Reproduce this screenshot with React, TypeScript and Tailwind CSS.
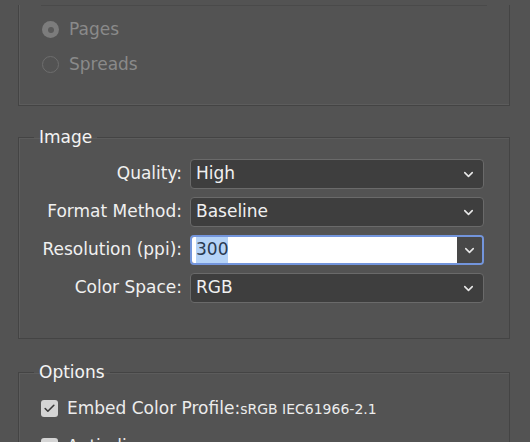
import { ChevronDown, Check } from 'lucide-react';

const font = { fontFamily: '"DejaVu Sans", "Liberation Sans", sans-serif' };

function Select({ value }: { value: string }) {
  return (
    <div className="flex h-[30px] flex-1 items-center justify-between rounded-[4px] border border-[#6a6a6a] bg-[#3e3e3e] pl-[5px] pr-[7px] text-[17px] text-[#f0f0f0]">
      <span>{value}</span>
      <ChevronDown className="h-[15px] w-[15px] text-[#e8e8e8]" strokeWidth={2.5} />
    </div>
  );
}

function Row({ label, children }: { label: string; children: React.ReactNode }) {
  return (
    <div className="flex items-center gap-[8px]">
      <div className="w-[155px] text-right text-[17px] text-[#f0f0f0]">{label}</div>
      {children}
    </div>
  );
}

export default function App() {
  return (
    <div className="h-[442px] w-[530px] overflow-hidden bg-[#535353] pl-[18px] pr-[20px]" style={font}>
      {/* Pages / Spreads */}
      <div className="-mt-[2px] h-[101px] border-x border-b border-[#444] shadow-[inset_1px_-1px_0_#5c5c5c]">
        <div className="mx-[22px] mt-[7px] h-px bg-[#4a4a4a]" />
        <div className="flex flex-col gap-[9px] pl-[23px] pt-[11px] text-[17px] text-[#8a8a8a]">
          <label className="flex items-center gap-[10px]">
            <span className="flex h-[17px] w-[17px] items-center justify-center rounded-full bg-[#7c7c7c]">
              <span className="h-[6px] w-[6px] rounded-full bg-[#5a5a5a]" />
            </span>
            Pages
          </label>
          <label className="flex items-center gap-[10px]">
            <span className="h-[17px] w-[17px] rounded-full border border-[#6e6e6e]" />
            Spreads
          </label>
        </div>
      </div>

      {/* Image */}
      <fieldset className="mt-[21px] h-[212px] border border-[#444] pb-[10px] shadow-[inset_1px_1px_0_#5c5c5c]">
        <legend className="ml-[15px] px-[5px] text-[17px] font-medium leading-[20px] text-[#f4f4f4]">Image</legend>
        <div className="mr-[25px] mt-[12px] flex flex-col gap-[8px] pl-[8px]">
          <Row label="Quality:">
            <Select value="High" />
          </Row>
          <Row label="Format Method:">
            <Select value="Baseline" />
          </Row>
          <Row label="Resolution (ppi):">
            <div className="flex h-[30px] flex-1 overflow-hidden rounded-[4px] border-2 border-[#7395dc] text-[17px]">
              <div className="flex flex-1 items-center bg-white pl-[4px]">
                <span className="bg-[#b5d3f7] text-[#2a3a50]">300</span>
              </div>
              <div className="flex w-[25px] items-center justify-center bg-[#484848]">
                <ChevronDown className="h-[15px] w-[15px] text-[#e8e8e8]" strokeWidth={2.5} />
              </div>
            </div>
          </Row>
          <Row label="Color Space:">
            <Select value="RGB" />
          </Row>
        </div>
      </fieldset>

      {/* Options */}
      <fieldset className="mt-[23px] h-[120px] border border-[#444] shadow-[inset_1px_1px_0_#5c5c5c]">
        <legend className="ml-[15px] px-[5px] text-[17px] font-medium leading-[20px] text-[#f4f4f4]">Options</legend>
        <div className="flex flex-col gap-[12px] pl-[22px] pt-[14px] text-[17px] text-[#ececec]">
          <label className="flex items-center gap-[9px]">
            <span className="flex h-[17px] w-[17px] items-center justify-center rounded-[3px] bg-[#d4d4d4]">
              <Check className="h-[13px] w-[13px] text-[#3a3a3a]" strokeWidth={3} />
            </span>
            <span>
              Embed Color Profile:<span className="text-[14px]">sRGB IEC61966-2.1</span>
            </span>
          </label>
          <label className="flex items-center gap-[9px]">
            <span className="flex h-[17px] w-[17px] items-center justify-center rounded-[3px] bg-[#d4d4d4]">
              <Check className="h-[13px] w-[13px] text-[#3a3a3a]" strokeWidth={3} />
            </span>
            Anti-alias
          </label>
        </div>
      </fieldset>
    </div>
  );
}
